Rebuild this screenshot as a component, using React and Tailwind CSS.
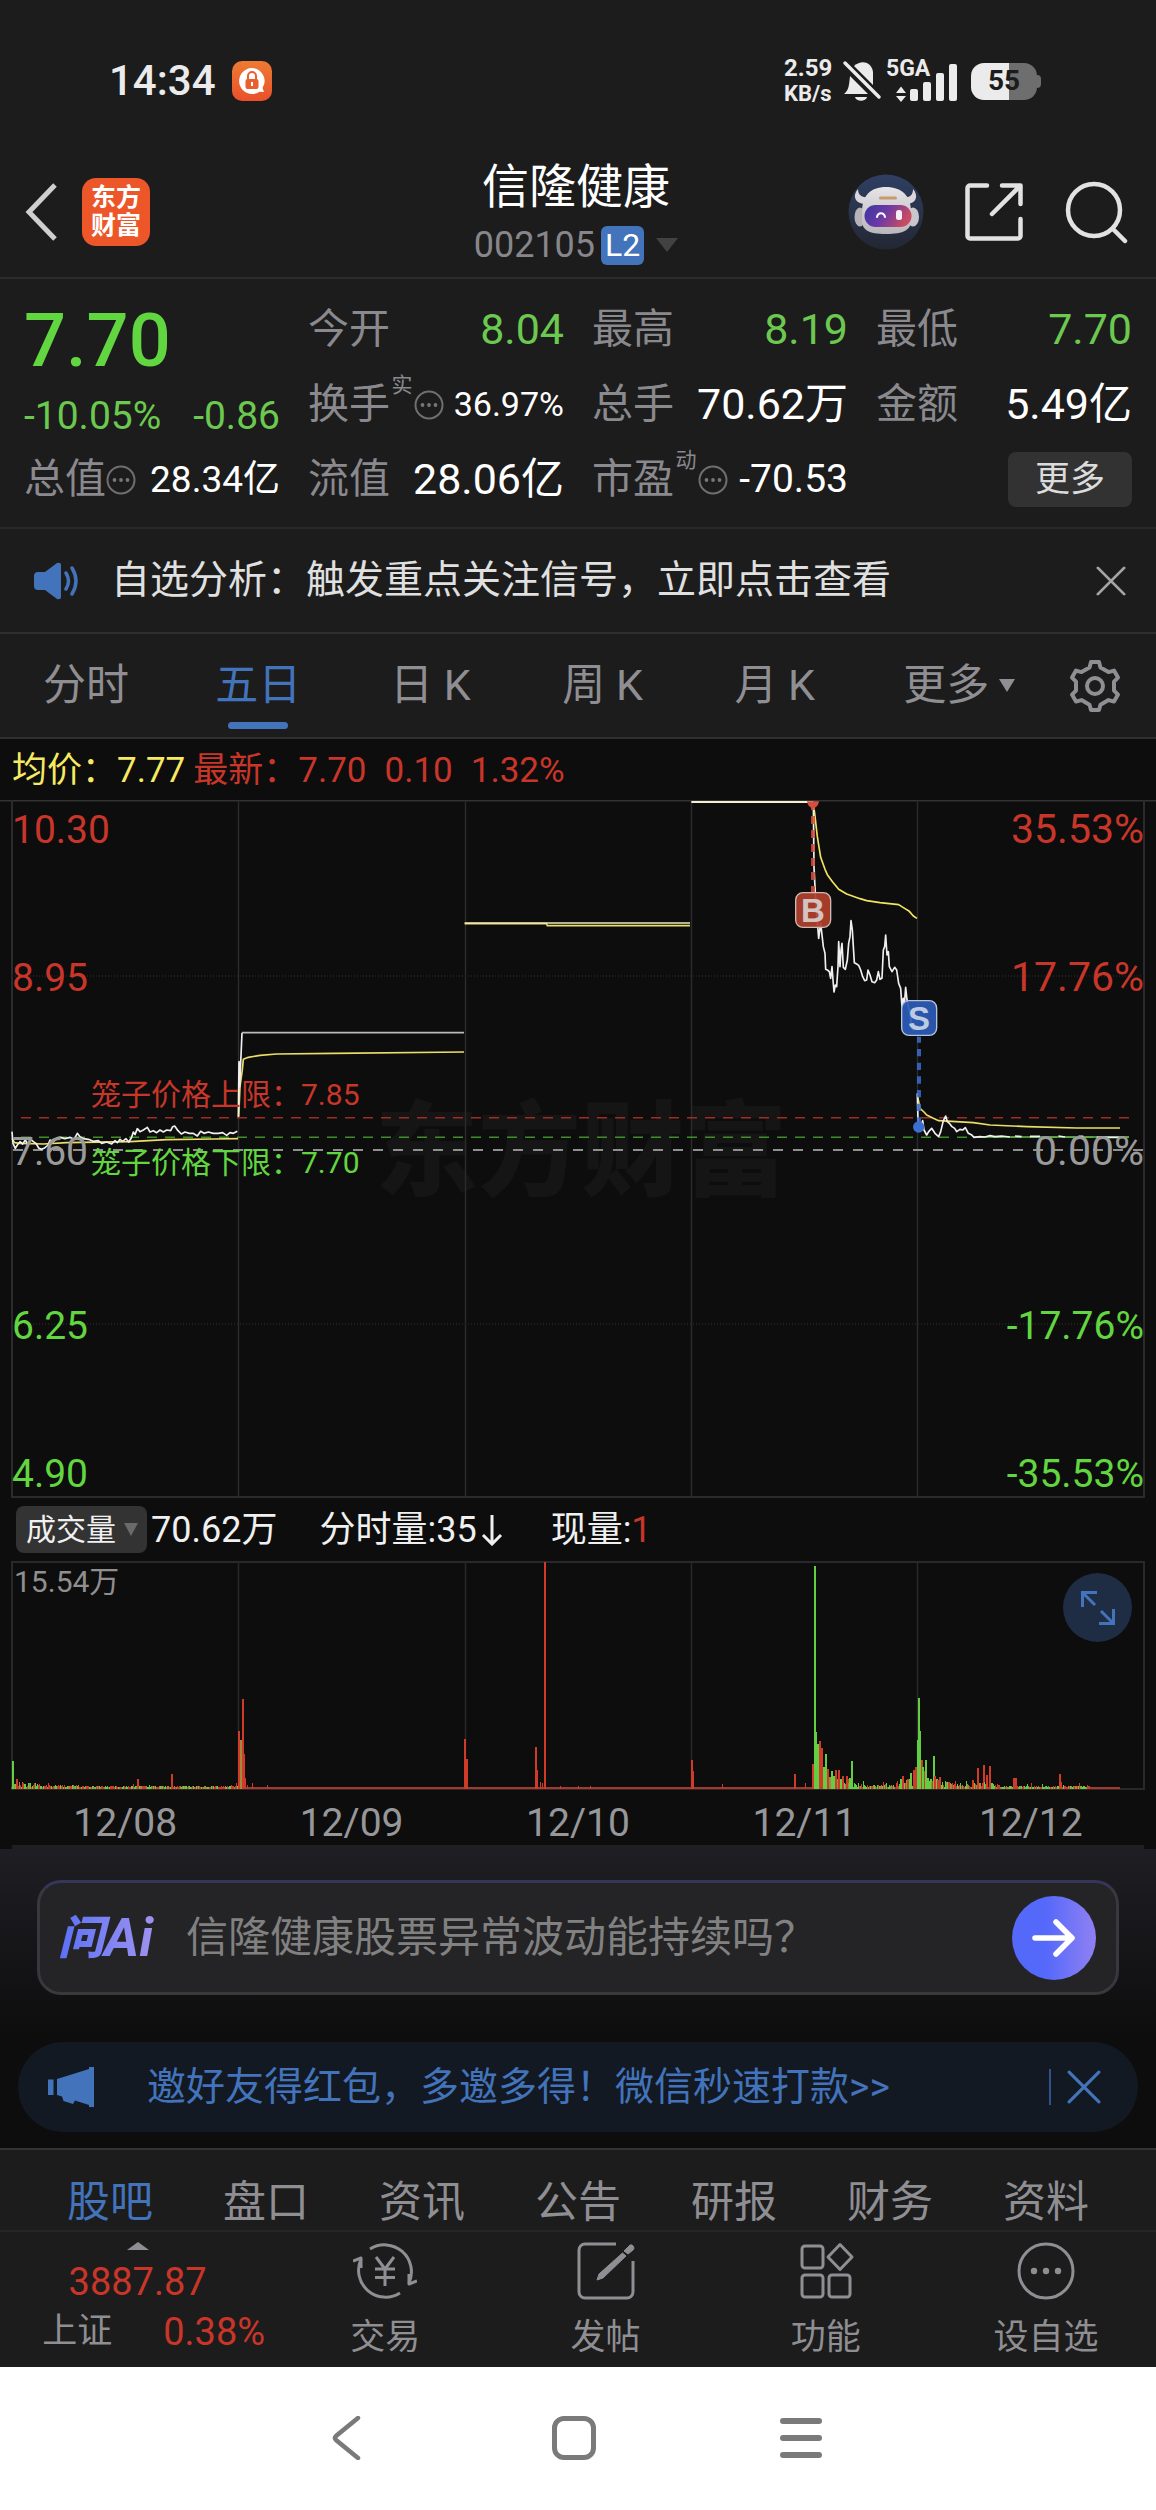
import React from "react";

const RED = "#c8362a";
const GREEN = "#62d640";

/* ---------- small icons ---------- */

function Dots({ className }) {
  return (
    <svg viewBox="0 0 30 30" className={className} fill="none" aria-hidden="true">
      <circle cx="15" cy="15" r="13.5" stroke="#6f6f72" strokeWidth="2" />
      <g fill="#77777a">
        <circle cx="8.5" cy="15" r="1.9" />
        <circle cx="15" cy="15" r="1.9" />
        <circle cx="21.5" cy="15" r="1.9" />
      </g>
    </svg>
  );
}

function Cross({ className }) {
  return (
    <svg viewBox="0 0 32 32" className={className} fill="none" stroke="currentColor" strokeWidth="3" strokeLinecap="round" aria-hidden="true">
      <path d="M2 2 30 30M30 2 2 30" />
    </svg>
  );
}

/* ---------- status bar ---------- */

function StatusBar() {
  return (
    <div className="flex h-[162px] items-center justify-between pr-[115px] pl-[109px] text-[#ebebeb]">
      <div className="flex items-center gap-4">
        <span className="text-[42px] leading-none font-medium">14:34</span>
        <svg viewBox="0 0 40 40" className="size-10" aria-hidden="true">
          <defs>
            <linearGradient id="lockBg" x1="0" y1="0" x2="0" y2="1">
              <stop offset="0" stopColor="#ee7a33" />
              <stop offset="1" stopColor="#e9502a" />
            </linearGradient>
          </defs>
          <rect width="40" height="40" rx="10" fill="url(#lockBg)" />
          <path d="M20 7a13 13 0 1 0 7.5 23.7L32 31l-1.500-4A13 13 0 0 0 20 7Z" fill="#fff" />
          <rect x="13.500" y="18" width="13" height="10" rx="2" fill="#ea5f2e" />
          <path d="M16 18v-3a4 4 0 0 1 8 0v3" fill="none" stroke="#ea5f2e" strokeWidth="2" />
          <path d="M20 21v4" stroke="#fff" strokeWidth="2" />
        </svg>
      </div>
      <div className="flex items-center">
        <div className="w-[58px] text-[24px] leading-[26px] font-bold">
          <div>2.59</div>
          <div className="text-[22px]">KB/s</div>
        </div>
        <svg viewBox="0 0 40 44" className="h-11 w-10" aria-hidden="true">
          <path d="M2 35c5-4 5-9 6-18L26 35Z" fill="#ebebeb" />
          <path d="M12 7c9-8 19-2 19 7v12Z" fill="#ebebeb" />
          <path d="M13 38h12c-1 5-11 5-12 0Z" fill="#ebebeb" />
          <path d="M3 4 37 38" stroke="#ebebeb" strokeWidth="3.500" strokeLinecap="round" />
        </svg>
        <div className="relative ml-1 h-[42px] w-[72px]">
          <span className="absolute top-0 left-0 text-[23px] leading-[18px] font-bold">5GA</span>
          <svg viewBox="0 0 72 42" className="size-full" fill="#ebebeb" aria-hidden="true">
            <path d="M10 33 15 26.500 20 33ZM10 36h10l-5 6Z" />
            <rect x="24" y="29" width="8" height="12" rx="2" />
            <rect x="37" y="22" width="8" height="19" rx="2" />
            <rect x="50" y="13" width="8" height="28" rx="2" />
            <rect x="63" y="4" width="8" height="37" rx="2" />
          </svg>
        </div>
        <div className="ml-[13px] flex items-center">
          <div className="flex h-[37px] w-[66px] items-center justify-center rounded-[13px] bg-linear-to-r from-[#ebebeb] from-58% to-[#6e6e6e] to-58% text-[28px] leading-none font-bold text-[#1c1c1c]">
            55
          </div>
          <div className="h-[13px] w-1 rounded-r-sm bg-[#6e6e6e]" />
        </div>
      </div>
    </div>
  );
}

/* ---------- header ---------- */

function Robot() {
  return (
    <svg viewBox="0 0 76 76" className="size-[76px]" aria-hidden="true">
      <defs>
        <linearGradient id="rbBg" x1="0" y1="0" x2="0" y2="1">
          <stop offset="0" stopColor="#2f3f63" />
          <stop offset="1" stopColor="#232733" />
        </linearGradient>
        <linearGradient id="rbFace" x1="0" y1="0" x2="1" y2="0.300">
          <stop offset="0" stopColor="#3a35a0" />
          <stop offset="0.500" stopColor="#6b3aa6" />
          <stop offset="1" stopColor="#c94a62" />
        </linearGradient>
        <linearGradient id="rbHead" x1="0" y1="0" x2="0" y2="1">
          <stop offset="0" stopColor="#e6e4e6" />
          <stop offset="1" stopColor="#b9b6bc" />
        </linearGradient>
      </defs>
      <circle cx="38" cy="38" r="37.500" fill="url(#rbBg)" />
      <path d="M10 15c-6 7-3 14 6 15l6-7c-7 1-12-1-12-8ZM65 15c6 7 3 14-5 15l-6-7c7 1 11-1 11-8Z" fill="#d9d7da" />
      <ellipse cx="12" cy="43" rx="5.500" ry="9.500" fill="#b5b3b8" />
      <ellipse cx="65" cy="43" rx="6" ry="9.500" fill="#c9c7cb" />
      <path d="M14 38c0-16 8-25 24-25s25 9 25 25v8c0 10-7 14-25 14s-24-4-24-14Z" fill="url(#rbHead)" />
      <rect x="31" y="22.500" width="18" height="3" rx="1.500" fill="#c99a6a" />
      <rect x="16.500" y="31" width="47" height="22" rx="11" fill="url(#rbFace)" />
      <path d="M29 43c1-5 7-5 8 0" stroke="#fff" strokeWidth="2" fill="none" strokeLinecap="round" />
      <rect x="48" y="36" width="6" height="10" rx="2.500" fill="#f5eef5" />
    </svg>
  );
}

function Header() {
  return (
    <header className="grid h-[117px] grid-cols-[1fr_auto_1fr] items-start border-b-2 border-[#2c2c2c] pr-7 pl-6">
      <div className="flex h-[100px] items-center gap-[22px]">
        <button aria-label="返回">
          <svg viewBox="0 0 36 60" className="h-[60px] w-9" fill="none" stroke="#cfcfcf" strokeWidth="5" aria-hidden="true">
            <path d="M31 3 5 30 31 57" />
          </svg>
        </button>
        <button className="h-[68px] w-[68px] rounded-[14px] bg-[#ec5629] text-[25px] leading-[28px] font-bold text-white">
          东方
          <br />
          财富
        </button>
      </div>
      <div className="flex flex-col items-center">
        <h1 className="text-[47px] leading-[50px] text-white">信隆健康</h1>
        <button className="mt-2.5 flex items-center gap-1.5 text-[36px] leading-[46px] text-[#87868b]">
          002105
          <span className="rounded-md bg-[#4273bb] px-1 text-[32px] leading-[39px] text-white">L2</span>
          <svg viewBox="0 0 22 14" className="ml-1.5 h-3.5 w-[22px]" fill="#424242" aria-hidden="true">
            <path d="M0 0h22L11 14Z" />
          </svg>
        </button>
      </div>
      <div className="flex h-[100px] items-center justify-end gap-10">
        <button aria-label="智能助手">
          <Robot />
        </button>
        <button aria-label="分享">
          <svg viewBox="0 0 60 60" className="size-[60px]" fill="none" stroke="#e2e2e2" strokeWidth="4.500" strokeLinecap="round" strokeLinejoin="round" aria-hidden="true">
            <path d="M23 3.500H6A2.500 2.500 0 0 0 3.500 6v48A2.500 2.500 0 0 0 6 56.500h48a2.500 2.500 0 0 0 2.500-2.500V37" />
            <path d="M38 3.500h18.500V22M56 4 28 32" />
          </svg>
        </button>
        <button aria-label="搜索">
          <svg viewBox="0 0 64 64" className="size-16" fill="none" stroke="#e2e2e2" strokeWidth="4.500" strokeLinecap="round" aria-hidden="true">
            <circle cx="30" cy="30" r="26" />
            <path d="M49 49 61 61" />
          </svg>
        </button>
      </div>
    </header>
  );
}

/* ---------- quote figures ---------- */

function Figure({ label, sup, dots, value, valueClass }) {
  return (
    <div className="flex items-center justify-between whitespace-nowrap">
      <span className="flex items-center text-[41px] text-[#8a898e]">
        {label}
        {sup && <sup className="-top-5 w-6 text-center text-[21px]">{sup}</sup>}
        {dots && <Dots className="size-[30px]" />}
      </span>
      <span className={valueClass}>{value}</span>
    </div>
  );
}

function Quote() {
  const green = "text-[43px] text-[#6cc950]";
  const white = "text-[43px] text-white";
  return (
    <section className="grid auto-rows-[75px] grid-cols-4 gap-x-7 border-b-2 border-[#282828] px-6 pt-[13px] pb-[10px]">
      <div className="row-span-2 flex flex-col">
        <span className="text-[74px] leading-[98px] font-medium text-[#62d640]">7.70</span>
        <span className="flex justify-between text-[39px] leading-[52px] text-[#6cc950]">
          <span>-10.05%</span>
          <span>-0.86</span>
        </span>
      </div>
      <Figure label="今开" value="8.04" valueClass={green} />
      <Figure label="最高" value="8.19" valueClass={green} />
      <Figure label="最低" value="7.70" valueClass={green} />
      <Figure label="换手" sup="实" dots value="36.97%" valueClass="text-[34px] text-white" />
      <Figure label="总手" value="70.62万" valueClass={white} />
      <Figure label="金额" value="5.49亿" valueClass={white} />
      <Figure label="总值" dots value="28.34亿" valueClass="text-[37px] text-white" />
      <Figure label="流值" value="28.06亿" valueClass={white} />
      <Figure label="市盈" sup="动" dots value="-70.53" valueClass="text-[39px] text-white" />
      <button className="h-[55px] w-[124px] self-center justify-self-end rounded-lg bg-[#323232] text-[35px] leading-none text-[#dcdcdc]">更多</button>
    </section>
  );
}

/* ---------- notice ---------- */

function Notice() {
  return (
    <section className="flex h-[105px] items-center border-b-2 border-[#2f2f2f] pr-[30px] pl-[33px]">
      <svg viewBox="0 0 46 38" className="mr-8 h-[38px] w-[46px]" aria-hidden="true">
        <path d="M5 10h7L24 1q4-1 4 2v32q0 3-4 2L12 28H5q-4 0-4-4V14q0-4 4-4Z" fill="#4273bb" />
        <path d="M33 11q5 8 0 16M39 6q8 13 0 26" fill="none" stroke="#4273bb" strokeWidth="3.500" strokeLinecap="round" />
      </svg>
      <a href="#signal" className="flex-1 text-[39px] text-[#e0e0e0]">自选分析：触发重点关注信号，立即点击查看</a>
      <button aria-label="关闭提示" className="text-[#a5a5a5]">
        <Cross className="size-[30px]" />
      </button>
    </section>
  );
}

/* ---------- period tabs ---------- */

function PeriodTabs() {
  return (
    <nav className="flex h-[105px] items-stretch border-b-2 border-[#2f2f2f] text-[43px] text-[#8f8e93]">
      {["分时", "五日", "日 K", "周 K", "月 K"].map((t) => (
        <button key={t} className={t === "五日" ? "relative flex-[172] text-[#4273bb]" : "flex-[172]"}>
          {t}
          {t === "五日" && <span className="absolute bottom-2 left-1/2 h-[7px] w-[60px] -translate-x-1/2 rounded-full bg-[#4273bb]" />}
        </button>
      ))}
      <button className="flex flex-[197] items-center justify-center gap-2.5">
        更多
        <svg viewBox="0 0 16 13" className="h-[13px] w-4" fill="#8f8e93" aria-hidden="true">
          <path d="M0 0h16L8 13Z" />
        </svg>
      </button>
      <button aria-label="设置" className="flex flex-[98] items-center justify-center">
        <svg viewBox="0 0 54 54" className="mr-6 size-[54px]" fill="none" stroke="#8f8e93" strokeWidth="4" strokeLinejoin="round" aria-hidden="true">
          <path d="M23 3h8l1.500 5.500 8 4.600 5.500-1.500 4 7-4 4v9l4 4-4 7-5.500-1.500-8 4.600L31 51h-8l-1.500-5.300-8-4.600L8 42.600l-4-7 4-4v-9l-4-4 4-7 5.500 1.500 8-4.600Z" />
          <circle cx="27" cy="27" r="8" />
        </svg>
      </button>
    </nav>
  );
}

/* ---------- price chart ---------- */

const DAY_LINES = [238, 465, 691, 917];

function PriceChart() {
  return (
    <svg viewBox="0 800 1156 698" className="block h-auto w-full" fontSize="39" role="img" aria-label="五日分时走势">
      <text x="581" y="1188" textAnchor="middle" fontSize="103" fontWeight="900" fill="#151515">东方财富</text>
      <g stroke="#2b2b2d" strokeWidth="1.500">
        <path d="M0 800.700H1156" stroke="#333" />
        <path d="M12 800V1498M1144 800V1498" strokeWidth="2" />
        {DAY_LINES.map((x) => (
          <path key={x} d={`M${x}.500 802V1498`} />
        ))}
        <path d="M12 976H1144M12 1324H1144" strokeDasharray="1 2" stroke="#262626" />
        <path d="M12 1497H1144" strokeWidth="2" />
      </g>
      <g fill={RED}>
        <text x="12" y="843">10.30</text>
        <text x="12" y="991">8.95</text>
        <text x="1144" y="843" textAnchor="end" fontSize="41">35.53%</text>
        <text x="1144" y="991" textAnchor="end" fontSize="41">17.76%</text>
      </g>
      <g fill={GREEN}>
        <text x="12" y="1339">6.25</text>
        <text x="12" y="1487">4.90</text>
        <text x="1144" y="1339" textAnchor="end">-17.76%</text>
        <text x="1144" y="1487" textAnchor="end">-35.53%</text>
      </g>
      <path d="M13 1150H1144" stroke="#8f8f8f" strokeWidth="2" strokeDasharray="10 10" />
      <path d="M21 1117.700H1129" stroke="#a02c24" strokeWidth="1.500" strokeDasharray="10 8" />
      <path d="M21 1137.200H1129" stroke="#3f8f28" strokeWidth="1.500" strokeDasharray="10 8" />

      <g transform="translate(0 780) scale(0.333333)" fill="none" strokeWidth="5" strokeLinejoin="round">
        <g stroke="#e9de68">
          <path d="M36 1075 44 1088 60 1090 130 1092 200 1088 390 1085 500 1079 640 1077 714 1076" />
          <path d="M716 1010 720 920 727 870 730 838 745 832 780 826 830 822 1000 820 1392 816" />
          <path d="M1394 431H1640L1642 437H2070" />
        </g>
        <g stroke="#f0f0f0">
          <path d="M36 1055 39 1090 46 1105 52 1095 60 1085 68 1092 76 1080 84 1095 92 1078 100 1085 108 1090 116 1104 124 1108 134 1104 144 1095 150 1080 160 1085 170 1075 180 1072 195 1076 210 1072 222 1078 232 1060 240 1070 250 1076 265 1078 280 1084 295 1082 305 1090 320 1086 335 1092 345 1082 352 1088 360 1078 368 1084 378 1076 386 1086 394 1074 400 1056 405 1064 412 1046 420 1055 430 1050 442 1042 450 1056 460 1052 470 1058 480 1050 490 1056 500 1050 512 1052 518 1040 524 1038 534 1052 544 1062 555 1056 568 1060 580 1060 592 1068 602 1054 612 1060 625 1056 640 1060 655 1060 668 1058 680 1066 690 1058 700 1060 712 1054" />
          <path d="M715 1010 717 845 719 920 726 758" />
          <path d="M726 758H1392" stroke="#b9bcbd" />
          <path d="M1394 429H2070" stroke="#efe9bd" strokeWidth="4" />
        </g>
      </g>
      <g transform="translate(660 780) scale(0.333333)" fill="none" strokeWidth="5" strokeLinejoin="round">
        <path d="M460 70 464 100 472 170 482 232 495 268 502 284 518 306 536 328 560 342 600 356 620 362 660 368 716 374 735 386 748 394 760 408 771 415" stroke="#f1e55f" />
        <path d="M94 66H460" stroke="#f3efd0" strokeWidth="6" />
        <path d="M460 66 462 262 466 340 470 400 476 475 482 430 490 500 495 520 497 568 502 570 508 575 512 595 516 560 519 600 522 636 526 615 530 620 534 560 536 485 540 560 543 510 546 490 550 562 556 568 562 540 566 490 570 470 573 422 577 450 580 500 583 548 590 552 596 556 602 570 608 590 614 602 620 600 624 570 630 585 636 605 644 608 650 600 655 575 660 598 666 595 670 510 674 500 677 465 681 525 685 515 688 560 696 575 704 562 710 570 716 610 722 625 726 680 730 655 733 675 737 622 741 660 750 700 755 740 760 752" stroke="#f0f0f0" />
        <path d="M942 1071H1407" stroke="#69b94f" />
        <path d="M773 950 780 985 792 996 800 1005 820 1015 836 1022 940 1028 990 1035 1100 1040 1250 1044 1380 1044" stroke="#e9de68" />
        <path d="M772 940 774 1020 782 1040 788 1022 792 1050 800 1065 806 1055 815 1045 825 1060 836 1070 842 1055 848 1030 852 1018 857 1008 862 1025 868 1030 876 1040 884 1045 890 1055 900 1048 908 1050 916 1043 925 1060 934 1064 942 1072 960 1070 975 1071 990 1067 1005 1070 1025 1068 1050 1071M1065 1068 1085 1070M1110 1069 1140 1069M1195 1068 1215 1071M1255 1069H1270M1310 1072H1378" stroke="#f0f0f0" />

        <path d="M459 66V337" stroke="#d4503c" strokeWidth="12" strokeDasharray="24 18" opacity="0.850" />
        <path d="M441 64H477Q474 84 459 84T441 64Z" fill="#d4503c" />
        <path d="M777 770V1040" stroke="#3b6fd0" strokeWidth="12" strokeDasharray="22 19" strokeDashoffset="4" opacity="0.850" />
        <circle cx="776" cy="1041" r="17" fill="#3b6fd0" />
        <rect x="407" y="338" width="105" height="104" rx="22" fill="#b13f2c" fillOpacity="0.930" stroke="#cdb9b6" strokeWidth="4" />
        <rect x="725" y="662" width="105" height="104" rx="22" fill="#2c5db8" fillOpacity="0.930" stroke="#b6c3da" strokeWidth="4" />
      </g>
      <g fontSize="33" fontWeight="700" textAnchor="middle" fontFamily="Liberation Sans">
        <text x="813" y="922" fill="#d3c3c1">B</text>
        <text x="919" y="1030" fill="#bccbe2">S</text>
      </g>
      <text x="12" y="1165" fill="#9a9a9a">7.60</text>
      <text x="1144" y="1165" fill="#9a9a9a" textAnchor="end" fontSize="41">0.00%</text>
      <text x="91" y="1105" fontSize="30" fill={RED}>笼子价格上限：7.85</text>
      <text x="91" y="1173" fontSize="30" fill={GREEN}>笼子价格下限：7.70</text>
    </svg>
  );
}

/* ---------- volume chart ---------- */

const R = "#d03a28";
const G = "#62cf42";
const O = "#a08a3c";

const SPIKES = [
  [12, 28, G], [16, 10, R], [19, 7, O], [22, 6, R], [25, 5, G], [38, 4, R], [48, 6, R], [76, 4, R], [133, 5, R], [137, 10, R],
  [149, 4, G], [171, 15, R], [196, 3, G], [231, 4, R], [236, 6, R], [238, 58, R], [240, 49, O], [242, 90, R], [243, 35, R],
  [244, 11, R], [245, 6, R], [247, 4, R], [252, 6, R], [267, 4, R], [464, 50, R], [466, 30, R], [535, 42, R], [536, 19, R],
  [537, 4, R], [540, 7, R], [542, 6, R], [544, 227, R], [560, 3, R], [578, 3, R], [590, 3, R], [691, 29, R], [692, 18, R],
  [722, 5, R], [794, 15, R], [805, 6, R], [812, 25, R], [815, 57, G], [814, 223, G], [816, 44, G], [817, 45, G], [819, 48, R],
  [821, 41, R], [823, 22, G], [825, 35, G], [827, 20, R], [829, 12, O], [831, 18, G], [833, 13, G], [835, 19, R], [838, 19, R],
  [840, 8, G], [842, 13, R], [844, 6, G], [847, 8, R], [851, 28, G], [854, 6, G], [858, 6, G], [863, 8, G], [883, 7, R],
  [886, 6, G], [900, 10, G], [902, 13, R], [907, 9, R], [910, 16, G], [913, 19, R], [915, 22, R], [917, 49, G], [918, 91, G],
  [919, 58, G], [921, 29, R], [922, 22, G], [924, 18, R], [925, 29, G], [927, 11, G], [933, 33, G], [934, 13, R], [937, 9, R],
  [939, 11, R], [945, 8, G], [955, 8, R], [966, 8, G], [972, 9, R], [974, 6, G], [977, 21, R], [983, 24, R], [984, 7, G],
  [986, 14, R], [989, 23, R], [992, 6, G], [1013, 11, R], [1015, 11, R], [1027, 5, G], [1031, 6, R], [1042, 5, G],
  [1059, 15, R], [1061, 7, R], [1063, 4, G], [1079, 6, R], [1081, 3, G], [1087, 4, R],
];

/* [from, to, tallest bar] of the busy stretches along the baseline */
const BUSY = [[13, 40, 7], [40, 80, 4], [80, 238, 3], [817, 850, 14], [850, 895, 5], [896, 918, 12], [918, 940, 14], [940, 1000, 7], [1000, 1090, 3]];

function noiseBars() {
  const bars = [];
  let seed = 7;
  const next = () => {
    seed = (seed * 1103515245 + 12345) % 2147483648;
    return seed / 2147483648;
  };
  BUSY.forEach(([from, to, top]) => {
    for (let x = from; x < to; x += 1) {
      const h = 2 + Math.round(next() * (top - 2));
      const c = next();
      bars.push([x, h, c < 0.4 ? R : c < 0.75 ? G : O]);
    }
  });
  return bars;
}

const BARS = [...noiseBars(), ...SPIKES];

function VolumeChart() {
  return (
    <div className="relative">
      <svg viewBox="0 1561 1156 229" className="block h-auto w-full" role="img" aria-label="成交量">
        <g stroke="#29292b" strokeWidth="1.500" fill="none">
          <path d="M12 1562H1144V1789H12Z" strokeWidth="2" />
          {DAY_LINES.map((x) => (
            <path key={x} d={`M${x}.500 1562V1789`} />
          ))}
        </g>
        <path d="M11 1787H1120V1789H11Z" fill="#a5392e" />
        {BARS.map(([x, h, c], i) => (
          <rect key={i} x={x} y={1789 - h} width={h > 8 ? 2 : 1} height={h} fill={c} />
        ))}
        <text x="14" y="1592" fontSize="30" fill="#8f8f8f">15.54万</text>
      </svg>
      <button aria-label="放大图表" className="absolute top-3 right-6 flex size-[69px] items-center justify-center rounded-full bg-[#1e2c44]">
        <svg viewBox="0 0 36 36" className="size-9" fill="none" stroke="#4273bb" strokeWidth="3" aria-hidden="true">
          <path d="M2.500 17V2.500H17M3 3 15 15M33.500 19v14.500H19M33 33 21 21" />
        </svg>
      </button>
    </div>
  );
}

function Charts() {
  return (
    <section>
      <div className="flex h-[61px] items-center pt-1 pl-3 text-[35px] whitespace-pre">
        <span className="text-[#f6ea62]">均价：7.77</span>
        <span className="ml-2 text-[#c8362a]">最新：7.70</span>
        <span className="ml-[18px] text-[#c8362a]">0.10</span>
        <span className="ml-[18px] text-[#c8362a]">1.32%</span>
      </div>
      <PriceChart />
      <div className="flex h-[63px] items-center pl-4 text-[36px] text-[#f0f0f0]">
        <button className="mr-1 flex h-[47px] w-[131px] items-center gap-2 rounded-lg bg-[#333] pl-2.5 text-[30px] leading-none">
          成交量
          <svg viewBox="0 0 14 13" className="h-[13px] w-3.5" fill="#6a6a6a" aria-hidden="true">
            <path d="M0 0h14L7 13Z" />
          </svg>
        </button>
        <span>70.62万</span>
        <span className="ml-[42px] flex items-center">
          分时量:35
          <svg viewBox="0 0 22 32" className="ml-1 h-8 w-[22px]" fill="none" stroke="#f0f0f0" strokeWidth="3" aria-hidden="true">
            <path d="M11 1V30M2 21l9 9 9-9" />
          </svg>
        </span>
        <span className="ml-12">
          现量:<span className="text-[#c8362a]">1</span>
        </span>
      </div>
      <VolumeChart />
      <div className="mx-3 grid h-[59px] grid-cols-5 items-center border-b-4 border-[#1f1f1f] pt-1 text-center text-[39px] text-[#97979a]">
        {["12/08", "12/09", "12/10", "12/11", "12/12"].map((d) => (
          <span key={d}>{d}</span>
        ))}
      </div>
    </section>
  );
}

/* ---------- AI question box ---------- */

function AskBox() {
  return (
    <section className="bg-linear-to-b from-[#1f1e24] to-[#0d0d0d] px-[37px] pt-[31px] pb-[47px]">
      <form className="flex h-[115px] items-center rounded-3xl border-[3px] border-t-[#35365a] border-r-[#38383f] border-b-[#3b3939] border-l-[#38383f] bg-[#242426] pr-5 pl-[18px]" onSubmit={(e) => e.preventDefault()}>
        <span className="flex w-[108px] items-center bg-linear-to-r from-[#5a70f5] to-[#a796ee] bg-clip-text text-[54px] leading-[60px] font-bold text-transparent italic">
          <span className="text-[46px] font-black">问</span>Ai
        </span>
        <input
          type="text"
          aria-label="向问Ai提问"
          placeholder="信隆健康股票异常波动能持续吗？"
          className="ml-5 min-w-0 flex-1 bg-transparent text-[42px] text-[#ccc] outline-none placeholder:text-[#818181]"
        />
        <button aria-label="发送" className="flex size-[84px] items-center justify-center rounded-full bg-linear-to-r from-[#5468fa] from-40% to-[#9080f2]">
          <svg viewBox="0 0 44 40" className="h-10 w-11" fill="none" stroke="#fff" strokeWidth="5.500" strokeLinecap="round" strokeLinejoin="round" aria-hidden="true">
            <path d="M3 20H40M24 4 40 20 24 36" />
          </svg>
        </button>
      </form>
    </section>
  );
}

function Banner() {
  return (
    <section className="mx-[18px] mb-4 flex h-[90px] items-center rounded-[45px] bg-[#121922] pr-[37px] pl-[30px] text-[#4273bb]">
      <svg viewBox="0 0 46 40" className="mr-[53px] h-10 w-[46px]" fill="#4273bb" aria-hidden="true">
        <path d="M0 12.500h5.500V28H0ZM9 12 41 2V0h5v40h-5v-2L27 33.500 25 37 15.500 34 14 29.500 9 28Z" />
      </svg>
      <a href="#invite" className="flex-1 text-[39px]">邀好友得红包，多邀多得！微信秒速打款&gt;&gt;</a>
      <span className="mr-4 h-9 w-0.5 bg-[#2f5388]" />
      <button aria-label="关闭横幅">
        <Cross className="size-[34px]" />
      </button>
    </section>
  );
}

/* ---------- bottom navigation ---------- */

const INFO_TABS = ["股吧", "盘口", "资讯", "公告", "研报", "财务", "资料"];

const ACTIONS = [
  {
    label: "交易",
    icon: (
      <>
        <path d="M17 9A27 27 0 0 1 56 43M47 53A27 27 0 0 1 8 19" />
        <path d="M0 21 8 18 8 28M64 41 56 44 56 34" />
        <path d="M23 17 32 29 41 17M32 29V46M22 29H42M22 37.500H42" />
      </>
    ),
  },
  {
    label: "发帖",
    icon: (
      <>
        <path d="M42 4H11a6 6 0 0 0-6 6v42a6 6 0 0 0 6 6h42a6 6 0 0 0 6-6V21" />
        <path d="M56 5a3 3 0 0 1 3 5L54 14 50 11ZM48.500 13 52 16 29 38l-6 2 2-6Z" fill="#8f8e93" strokeWidth="1" />
      </>
    ),
  },
  {
    label: "功能",
    icon: (
      <>
        <rect x="8" y="6" width="21" height="22" rx="3" />
        <rect x="8" y="35" width="21" height="22" rx="3" />
        <rect x="35" y="35" width="21" height="22" rx="3" />
        <path d="M46 4.500 58 17 46 29.500 34 17Z" />
      </>
    ),
  },
  {
    label: "设自选",
    icon: (
      <>
        <circle cx="32" cy="31" r="27" />
        <g fill="#8f8e93" stroke="none">
          <circle cx="20" cy="31" r="3.200" />
          <circle cx="32" cy="31" r="3.200" />
          <circle cx="44" cy="31" r="3.200" />
        </g>
      </>
    ),
  },
];

function BottomBar() {
  return (
    <footer className="bg-[#1c1c1c] text-[#8f8e93]">
      <nav className="flex h-[84px] border-t-2 border-b-2 border-t-[#333] border-b-[#252525] px-8 pt-5 text-[43px] leading-[64px]">
        {INFO_TABS.map((t) => (
          <button key={t} className={t === "股吧" ? "flex-1 text-[#4273bb]" : "flex-1"}>
            {t}
          </button>
        ))}
      </nav>
      <div className="flex h-[135px]">
        <button className="flex flex-[275] flex-col items-center pt-2.5 text-[38px] text-[#c8362a]">
          <svg viewBox="0 0 22 8" className="h-2 w-[22px]" fill="#8f8e93" aria-hidden="true">
            <path d="M11 0 22 8H0Z" />
          </svg>
          <span className="mt-2.5 leading-[44px]">3887.87</span>
          <span className="mt-0.5 flex items-center gap-[51px] pl-8 leading-[52px]">
            <span className="text-[35px] text-[#8f8e93]">上证</span>
            <span>0.38%</span>
          </span>
        </button>
        {ACTIONS.map((a) => (
          <button key={a.label} className="flex flex-[220] flex-col items-center pt-2 text-[35px] leading-[52px]">
            <svg viewBox="0 0 64 64" className="size-[64px]" fill="none" stroke="#8f8e93" strokeWidth="3" strokeLinejoin="round" aria-hidden="true">
              {a.icon}
            </svg>
            <span className="mt-2">{a.label}</span>
          </button>
        ))}
      </div>
    </footer>
  );
}

function SystemNav() {
  return (
    <nav className="flex h-[142px] items-center justify-center bg-white pr-2 text-[#7a7a7a]">
      <button aria-label="系统返回" className="flex w-[227px] justify-center">
        <svg viewBox="0 0 44 44" className="size-11" fill="none" stroke="currentColor" strokeWidth="4.500" strokeLinecap="round" aria-hidden="true">
          <path d="M33 2 11 20q-2 2 0 4L33 42" />
        </svg>
      </button>
      <button aria-label="主屏幕" className="flex w-[227px] justify-center">
        <span className="size-11 rounded-xl border-[5px] border-[#7a7a7a]" />
      </button>
      <button aria-label="最近任务" className="flex w-[227px] justify-center">
        <svg viewBox="0 0 42 40" className="h-10 w-[42px]" stroke="currentColor" strokeWidth="6" strokeLinecap="round" aria-hidden="true">
          <path d="M3 3H39M3 20H39M3 37H39" />
        </svg>
      </button>
    </nav>
  );
}

export default function App() {
  return (
    <div className="w-full bg-[#0d0d0d] font-[Roboto,'Noto_Sans_CJK_SC',sans-serif] [&_button]:cursor-pointer">
      <div className="bg-[#1c1c1c]">
        <StatusBar />
        <Header />
        <Quote />
        <Notice />
        <PeriodTabs />
      </div>
      <Charts />
      <AskBox />
      <Banner />
      <BottomBar />
      <SystemNav />
    </div>
  );
}
